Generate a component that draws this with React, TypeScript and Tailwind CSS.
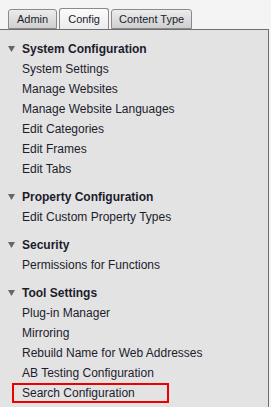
const sections = [
  {
    title: "System Configuration",
    items: [
      "System Settings",
      "Manage Websites",
      "Manage Website Languages",
      "Edit Categories",
      "Edit Frames",
      "Edit Tabs",
    ],
  },
  { title: "Property Configuration", items: ["Edit Custom Property Types"] },
  { title: "Security", items: ["Permissions for Functions"] },
  {
    title: "Tool Settings",
    items: [
      "Plug-in Manager",
      "Mirroring",
      "Rebuild Name for Web Addresses",
      "AB Testing Configuration",
      "Search Configuration",
    ],
  },
];

const Tab = ({ label, active, pad }: { label: string; active?: boolean; pad: string }) => (
  <div
    className={
      (active
        ? "h-[21px] border-b-0 bg-gradient-to-b from-[#fbfbfb] to-[#ececec] "
        : "h-[20px] bg-gradient-to-b from-[#ececec] to-[#cfcfcf] ") +
      "flex items-center text-[11px] border border-[#8a8a8a] rounded-t-[3px] " +
      pad
    }
  >
    {label}
  </div>
);

const App = () => {
  return (
    <div className="w-[271px] h-[407px] bg-[#f4f4f4] font-['Liberation_Sans',Arial,sans-serif] text-[12px] text-[#1c1c2c] overflow-hidden">
      <div className="flex items-end gap-[2px] pl-[8px] h-[29px]">
        <Tab label="Admin" pad="px-[8px]" />
        <Tab label="Config" active pad="px-[8px]" />
        <Tab label="Content Type" pad="px-[7px]" />
      </div>
      <div className="w-[269px] h-[378px] bg-[#e3e3e3] border-t border-r border-[#6e6e6e] pt-[8px]">
        {sections.map((s) => (
          <div key={s.title} className="mb-[7px]">
            <div className="flex items-center h-[21px] pl-[8px]">
              <svg width="7" height="6" viewBox="0 0 7 6" className="mr-[7px]">
                <polygon points="0,0 7,0 3.5,6" fill="#666" />
              </svg>
              <span className="font-bold">{s.title}</span>
            </div>
            {s.items.map((item) =>
              item === "Search Configuration" ? (
                <div key={item} className="ml-[12px] w-[157px] h-[20px] pl-[8px] flex items-center border-2 border-[#ee0000]">
                  {item}
                </div>
              ) : (
                <div key={item} className="h-[20px] pl-[22px] flex items-center">
                  {item}
                </div>
              )
            )}
          </div>
        ))}
      </div>
    </div>
  );
};

export default App;
